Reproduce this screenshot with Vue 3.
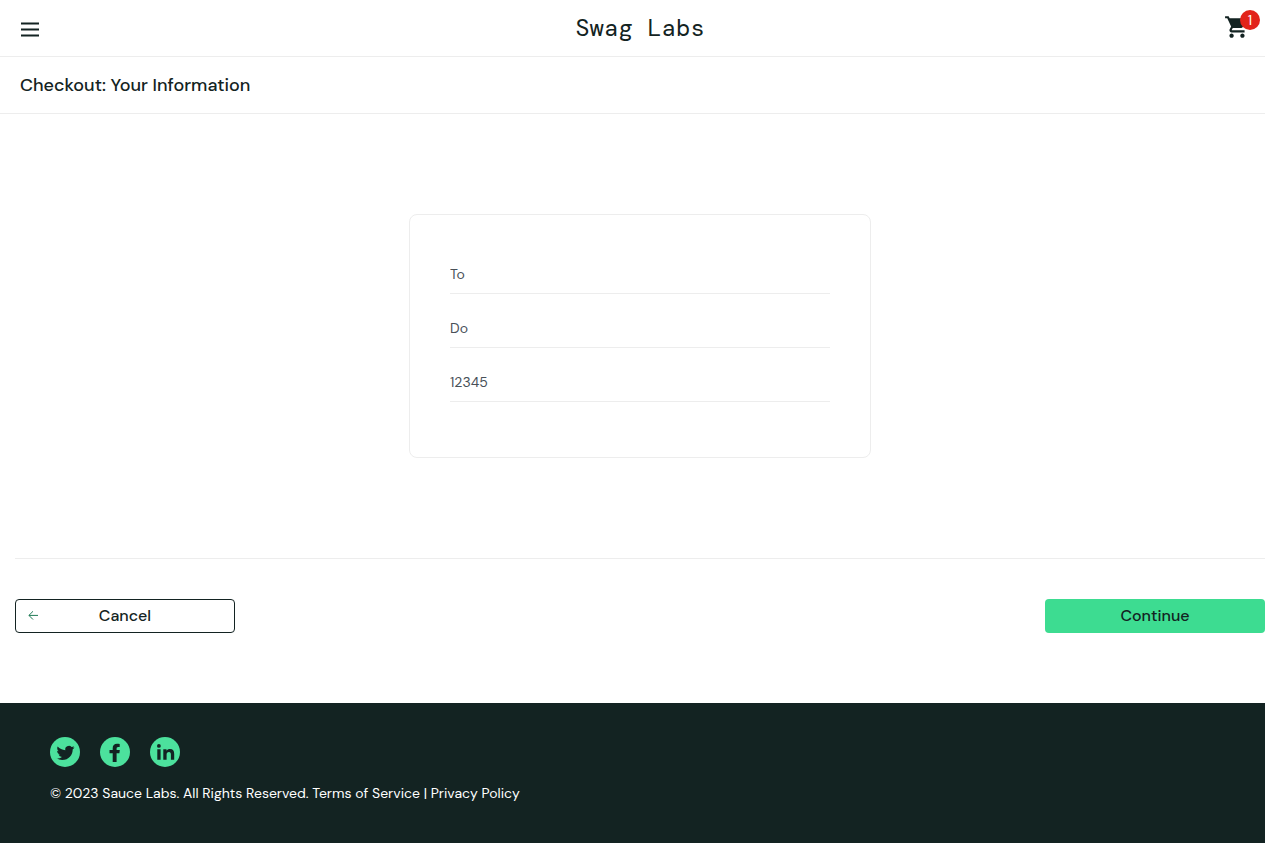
<script setup>
import { ref } from 'vue'

const cartCount = ref(1)
const fields = ref([
  { id: 'first-name', label: 'First Name', value: 'To' },
  { id: 'last-name', label: 'Last Name', value: 'Do' },
  { id: 'postal-code', label: 'Zip/Postal Code', value: '12345' }
])
</script>

<template>
  <div class="page">
    <header class="header">
      <button class="menu" type="button" aria-label="Open Menu">
        <svg viewBox="0 0 20 16" width="20" height="16" aria-hidden="true">
          <path d="M1 2.500H19M1 8.400H19M1 14.400H19" stroke="#132322" stroke-width="2" />
        </svg>
      </button>
      <div class="logo">Swag Labs</div>
      <a class="cart" href="#cart" aria-label="Shopping cart">
        <svg viewBox="0 0 24 24" width="26" height="26" aria-hidden="true">
          <path fill="#132322" d="M7 18c-1.1 0-1.99.9-1.99 2S5.900 22 7 22s2-.9 2-2-.9-2-2-2zM1 2v2h2l3.600 7.590-1.350 2.450c-.16.28-.25.61-.25.96 0 1.100.9 2 2 2h12v-2H7.420c-.14 0-.25-.11-.25-.25l.03-.12.9-1.630h7.450c.75 0 1.410-.41 1.750-1.030l3.580-6.490c.08-.14.12-.31.12-.48 0-.55-.45-1-1-1H5.210l-.94-2H1zm16 16c-1.100 0-1.990.9-1.990 2s.89 2 1.990 2 2-.9 2-2-.9-2-2-2z" />
        </svg>
        <span class="badge">{{ cartCount }}</span>
      </a>
    </header>

    <div class="subheader">
      <h1 class="title">Checkout: Your Information</h1>
    </div>

    <form class="checkout" @submit.prevent>
      <div class="card">
        <div v-for="field in fields" :key="field.id" class="field">
          <input :id="field.id" v-model="field.value" class="input" type="text" :aria-label="field.label" />
        </div>
      </div>
      <div class="actions">
        <button class="btn cancel" type="button">
          <svg class="arrow" viewBox="0 0 10 10" width="10" height="10" aria-hidden="true">
            <path d="M10 5.400H1M5 1.300L.9 5.400L5 9.500" fill="none" stroke="#1f7a55" stroke-width="1" />
          </svg>
          Cancel
        </button>
        <button class="btn continue" type="submit">Continue</button>
      </div>
    </form>

    <footer class="footer">
      <div class="social">
        <a href="#twitter" aria-label="Twitter">
          <svg viewBox="0 0 30 30" width="30" height="30" aria-hidden="true">
            <circle cx="15" cy="15" r="15" fill="#4ce19d" />
            <path fill="#132322" transform="translate(6.500 7.300) scale(.75 .72)" d="M23.950 4.570a10 10 0 0 1-2.820.77 4.960 4.960 0 0 0 2.160-2.720c-.95.550-2 .96-3.130 1.180a4.920 4.920 0 0 0-8.380 4.480C7.690 8.100 4.070 6.130 1.640 3.160a4.820 4.820 0 0 0-.67 2.480c0 1.710.87 3.210 2.190 4.100a4.900 4.900 0 0 1-2.230-.62v.06a4.920 4.920 0 0 0 3.950 4.830 5 5 0 0 1-2.210.08 4.940 4.940 0 0 0 4.600 3.420A9.870 9.870 0 0 1 0 19.540a13.990 13.990 0 0 0 7.550 2.210c9.050 0 14-7.500 14-13.980 0-.21 0-.42-.02-.63a9.940 9.940 0 0 0 2.460-2.550z" />
          </svg>
        </a>
        <a href="#facebook" aria-label="Facebook">
          <svg viewBox="0 0 30 30" width="30" height="30" aria-hidden="true">
            <circle cx="15" cy="15" r="15" fill="#4ce19d" />
            <path fill="#132322" d="M12.700 25V16.200H9.500V13H12.700V11.300C12.700 8.300 14.200 6.800 17 6.800C18 6.800 18.900 6.900 19.700 7.100V10H18.200C16.900 10 16.600 10.700 16.600 11.800V13H19.800L19.400 16.200H16.600V25Z" />
          </svg>
        </a>
        <a href="#linkedin" aria-label="LinkedIn">
          <svg viewBox="0 0 30 30" width="30" height="30" aria-hidden="true">
            <circle cx="15" cy="15" r="15" fill="#4ce19d" />
            <circle cx="8.900" cy="8.900" r="1.900" fill="#132322" />
            <path fill="#132322" d="M7.300 12.200H10.600V22.700H7.300ZM13.300 12.200H16.500V13.700C17.200 12.600 18.500 12 20 12C23 12 24.200 13.900 24.200 16.900V22.700H20.900V17.600C20.900 16 20.400 14.900 19 14.900C17.400 14.900 16.600 16 16.600 17.600V22.700H13.300Z" />
          </svg>
        </a>
      </div>
      <p class="copy">© 2023 Sauce Labs. All Rights Reserved. Terms of Service | Privacy Policy</p>
    </footer>
  </div>
</template>

<style>
body {
  margin: 0;
  background: #fff;
}
</style>

<style scoped>
.page,
.page * {
  box-sizing: border-box;
}

.page {
  display: flex;
  flex-direction: column;
  min-height: 100vh;
  color: #132322;
  font-family: "DM Sans", Inter, "Open Sans", sans-serif;
  font-size: 14px;
}

.header {
  display: grid;
  grid-template-columns: 1fr auto 1fr;
  align-items: center;
  height: 57px;
  padding: 0 5px 0 20px;
  border-bottom: 1px solid #ededed;
}

.menu {
  justify-self: start;
  display: flex;
  padding: 2px 0 0;
  border: 0;
  background: none;
}

.logo {
  font-family: "DM Mono", "DejaVu Sans Mono", monospace;
  font-size: 24px;
  line-height: 32px;
}

.cart {
  position: relative;
  justify-self: end;
  display: flex;
  align-items: flex-end;
  width: 36px;
  height: 36px;
  padding-bottom: 6px;
}

.badge {
  position: absolute;
  top: 0;
  right: 0;
  width: 20px;
  height: 20px;
  border-radius: 50%;
  background: #e2231a;
  color: #fff;
  font-size: 14px;
  line-height: 20px;
  text-align: center;
}

.subheader {
  display: flex;
  align-items: center;
  height: 57px;
  padding: 0 20px;
  border-bottom: 1px solid #ededed;
}

.title {
  margin: 0;
  font-size: 18px;
  font-weight: 500;
  line-height: 24px;
}

.checkout {
  display: flex;
  flex-direction: column;
  padding: 100px 0 70px 15px;
}

.card {
  align-self: center;
  width: 462px;
  max-width: 100%;
  padding: 40px;
  border: 1px solid #ededed;
  border-radius: 8px;
}

.field {
  margin-bottom: 15px;
}

.input {
  display: block;
  width: 100%;
  height: 39px;
  padding: 0;
  border: 0;
  border-bottom: 1px solid #ededed;
  outline: 0;
  background: none;
  color: #485058;
  font-family: inherit;
  font-size: 14px;
}

.actions {
  display: flex;
  justify-content: space-between;
  margin-top: 100px;
  padding-top: 40px;
  border-top: 1px solid #ededed;
}

.btn {
  width: 220px;
  height: 34px;
  padding: 0 0 2px;
  border-radius: 4px;
  color: #132322;
  font-family: inherit;
  font-size: 16px;
  font-weight: 500;
}

.cancel {
  position: relative;
  border: 1px solid #132322;
  background: #fff;
}

.arrow {
  position: absolute;
  top: 10px;
  left: 12px;
}

.continue {
  border: 0;
  background: #3ddc91;
}

.footer {
  flex: 1;
  padding: 34px 50px;
  background: #132322;
  color: #fff;
}

.social {
  display: flex;
  gap: 20px;
}

.social a {
  display: flex;
}

.copy {
  margin: 16px 0 0;
  font-size: 14px;
  line-height: 20px;
}
</style>
